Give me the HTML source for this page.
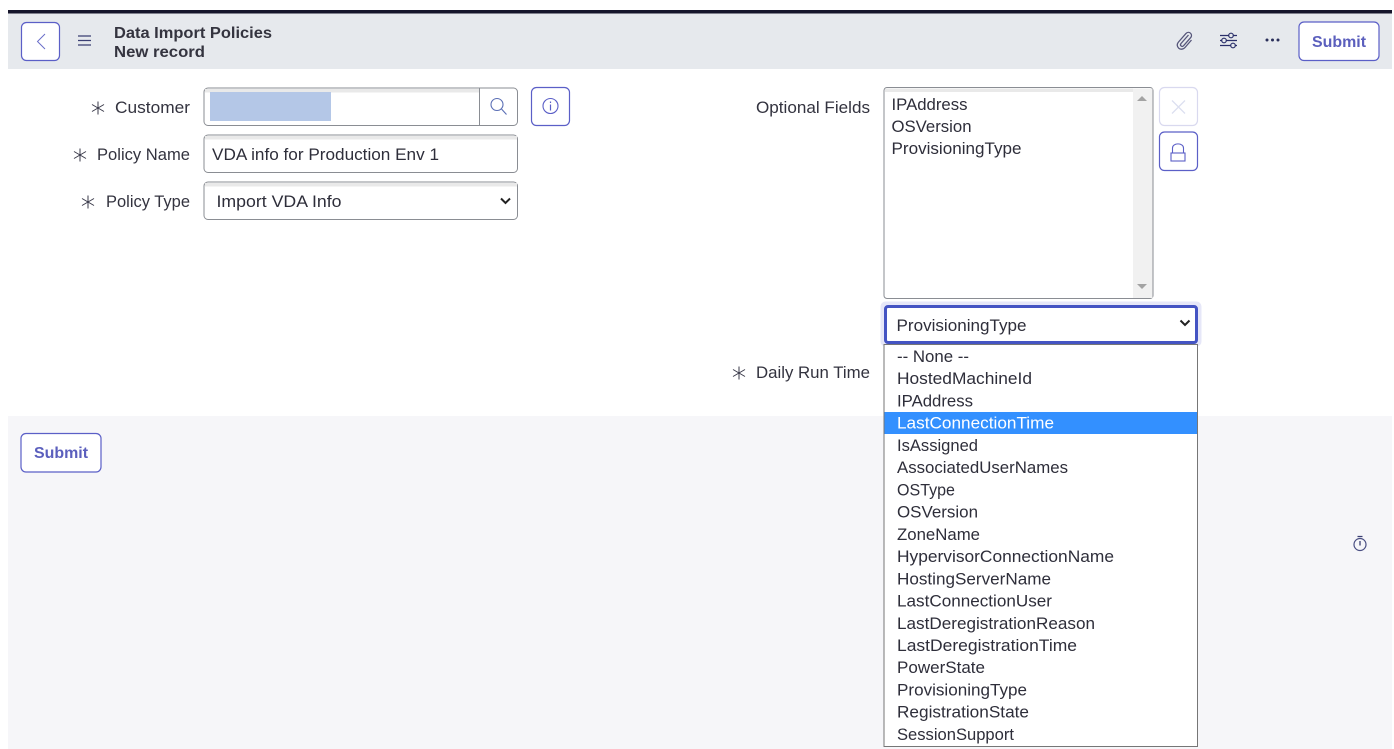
<!DOCTYPE html>
<html lang="en">
<head>
<meta charset="utf-8">
<title>Data Import Policies</title>
<style>
html,body{margin:0;padding:0;background:#fff;width:1394px;height:749px;overflow:hidden}
svg{display:block}
text{font-family:"Liberation Sans",sans-serif;font-size:16.5px;fill:#2e2e3a}
.b{font-weight:bold;font-size:16px}
.s{font-weight:bold;font-size:16px;fill:#5b5fbd}
.l{fill:#33333f}
</style>
</head>
<body>
<svg width="1394" height="749" viewBox="0 0 1394 749" xmlns="http://www.w3.org/2000/svg">
<rect x="8" y="10" width="1384" height="3.500" fill="#15152b"/>
<rect x="8" y="13.500" width="1384" height="55.500" fill="#e6e9ed"/>
<rect x="8" y="416" width="1384" height="333" fill="#f6f6f9"/>

<!-- header left -->
<rect x="21.500" y="22.500" width="38" height="38" rx="5" fill="#fff" stroke="#5b5fc7" stroke-width="1.200"/>
<path d="M45 34l-7.500 7.500 7.500 7.500" fill="none" stroke="#6a6ec9" stroke-width="1"/>
<path d="M78 36h13M78 40.500h13M78 45h13" stroke="#3a3f73" stroke-width="1.200" fill="none"/>
<text x="114" y="38" textLength="158" lengthAdjust="spacingAndGlyphs" class="b" style="fill:#34343f">Data Import Policies</text>
<text x="114" y="57" textLength="91" lengthAdjust="spacingAndGlyphs" class="b" style="fill:#34343f">New record</text>

<!-- header right icons -->
<path d="M1188.500 35l-7.500 8.500c-1.500 1.800 .8 4 2.500 2.300l7-8c3-3.400-1.600-7.500-4.600-4.200l-7.400 8.400c-4 4.700 2.500 10 6.500 5.500l6.500-7.500" fill="none" stroke="#56567a" stroke-width="1.300"/>
<path d="M1220 35.500h17M1220 40.500h17M1220 45.500h17" stroke="#2a2f6a" stroke-width="1.200" fill="none"/>
<circle cx="1231" cy="35.500" r="2.300" fill="#e6e9ed" stroke="#2a2f6a" stroke-width="1.200"/>
<circle cx="1224" cy="40.500" r="2.300" fill="#e6e9ed" stroke="#2a2f6a" stroke-width="1.200"/>
<circle cx="1233" cy="45.500" r="2.300" fill="#e6e9ed" stroke="#2a2f6a" stroke-width="1.200"/>
<circle cx="1267" cy="40" r="1.500" fill="#2a2f5a"/><circle cx="1272.500" cy="40" r="1.500" fill="#2a2f5a"/><circle cx="1278" cy="40" r="1.500" fill="#2a2f5a"/>
<rect x="1299" y="22" width="80" height="38.500" rx="5" fill="#fff" stroke="#5b5fc7" stroke-width="1.200"/>
<text x="1312" y="47" textLength="54" lengthAdjust="spacingAndGlyphs" class="s">Submit</text>

<!-- left form -->
<g stroke="#3a3a4a" stroke-width="1" fill="none">
<path d="M98 101.500v13M92 104.500l12 7M104 104.500l-12 7"/>
<path d="M80 148.500v13M74 151.500l12 7M86 151.500l-12 7"/>
<path d="M88 195.500v13M82 198.500l12 7M94 198.500l-12 7"/>
<path d="M739 366.500v13M733 369.500l12 7M745 369.500l-12 7"/>
</g>
<text x="115" y="113" textLength="75" lengthAdjust="spacingAndGlyphs" class="l">Customer</text>
<text x="97" y="160" textLength="93" lengthAdjust="spacingAndGlyphs" class="l">Policy Name</text>
<text x="106" y="207" textLength="84" lengthAdjust="spacingAndGlyphs" class="l">Policy Type</text>

<rect x="204" y="88" width="313.500" height="37.500" rx="4" fill="#fff" stroke="#8a8d93" stroke-width="1"/>
<rect x="205" y="89" width="274" height="3.500" fill="#e9e9e9"/>
<path d="M479.500 88v37.500" stroke="#8a8d93" stroke-width="1"/>
<rect x="210" y="92" width="121" height="29" fill="#b4c7e7"/>
<circle cx="497" cy="104.500" r="6" fill="none" stroke="#5b6fb5" stroke-width="1.100"/>
<path d="M501.500 109l5 5.500" stroke="#5b6fb5" stroke-width="1.100"/>

<rect x="531.500" y="87.500" width="38" height="38" rx="5" fill="#fff" stroke="#5b5fc7" stroke-width="1.200"/>
<circle cx="550.500" cy="106" r="7.500" fill="none" stroke="#5b5fc7" stroke-width="1.100"/>
<path d="M550.500 104.500v6M550.500 101.500v1.500" stroke="#5b5fc7" stroke-width="1.200"/>

<rect x="204" y="135" width="313.500" height="37.500" rx="4" fill="#fff" stroke="#8a8d93" stroke-width="1"/>
<rect x="205" y="136" width="312" height="3.500" fill="#e9e9e9"/>
<text x="212" y="160" textLength="227" lengthAdjust="spacingAndGlyphs">VDA info for Production Env 1</text>

<rect x="204" y="182" width="313.500" height="37.500" rx="4" fill="#fff" stroke="#8a8d93" stroke-width="1"/>
<rect x="205" y="183" width="312" height="3.500" fill="#e9e9e9"/>
<text x="216.500" y="207" textLength="125" lengthAdjust="spacingAndGlyphs">Import VDA Info</text>
<path d="M501 198.500l4.500 4.500 4.500-4.500" fill="none" stroke="#222" stroke-width="2"/>

<!-- right form -->
<text x="756" y="113" textLength="114" lengthAdjust="spacingAndGlyphs" class="l">Optional Fields</text>
<rect x="884" y="87.500" width="269" height="211" rx="3" fill="#fff" stroke="#8a8d93" stroke-width="1"/>
<rect x="885" y="88.500" width="248" height="3.500" fill="#e9e9e9"/>
<rect x="1133" y="88.500" width="19.500" height="209.500" fill="#f1f1f1"/>
<path d="M1137 101l5-5 5 5z" fill="#a3a3a3"/>
<path d="M1137 284l5 5 5-5z" fill="#a3a3a3"/>
<text x="891.500" y="110" textLength="76" lengthAdjust="spacingAndGlyphs">IPAddress</text>
<text x="891.500" y="132" textLength="80" lengthAdjust="spacingAndGlyphs">OSVersion</text>
<text x="891.500" y="154" textLength="130" lengthAdjust="spacingAndGlyphs">ProvisioningType</text>

<rect x="1159.500" y="87.500" width="38" height="38" rx="5" fill="#fff" stroke="#d9d9ef" stroke-width="1.200"/>
<path d="M1172 100.500l13 13M1185 100.500l-13 13" stroke="#dcdff0" stroke-width="1.300"/>
<rect x="1159.500" y="132" width="38" height="38.500" rx="5" fill="#fff" stroke="#5b5fc7" stroke-width="1.200"/>
<rect x="1171" y="153" width="14" height="8" fill="none" stroke="#5b5fc7" stroke-width="1.100"/>
<path d="M1172.500 153v-5c0-5.500 11-5.500 11 0v5" fill="none" stroke="#5b5fc7" stroke-width="1.100"/>

<rect x="880.500" y="301.500" width="321" height="45" rx="5" fill="#e6e7f8"/>
<rect x="885.500" y="306.500" width="311" height="36" rx="2.500" fill="#fff" stroke="#4454c3" stroke-width="3"/>
<text x="896.500" y="331" textLength="130" lengthAdjust="spacingAndGlyphs">ProvisioningType</text>
<path d="M1180.500 320.500l4.500 4.500 4.500-4.500" fill="none" stroke="#222" stroke-width="2"/>

<text x="756" y="378" textLength="114" lengthAdjust="spacingAndGlyphs" class="l">Daily Run Time</text>

<!-- dropdown -->
<rect x="884" y="344.500" width="313.500" height="402" fill="#fff" stroke="#767676" stroke-width="1"/>
<rect x="884.500" y="412" width="312.500" height="22" fill="#3390ff"/>
<text x="897" y="362" textLength="72" lengthAdjust="spacingAndGlyphs">-- None --</text>
<text x="897" y="384.200" textLength="135" lengthAdjust="spacingAndGlyphs">HostedMachineId</text>
<text x="897" y="406.400" textLength="76" lengthAdjust="spacingAndGlyphs">IPAddress</text>
<text x="897" y="428.700" textLength="157" lengthAdjust="spacingAndGlyphs" style="fill:#fff">LastConnectionTime</text>
<text x="897" y="450.900" textLength="81" lengthAdjust="spacingAndGlyphs">IsAssigned</text>
<text x="897" y="473.100" textLength="171" lengthAdjust="spacingAndGlyphs">AssociatedUserNames</text>
<text x="897" y="495.400" textLength="58" lengthAdjust="spacingAndGlyphs">OSType</text>
<text x="897" y="517.600" textLength="81" lengthAdjust="spacingAndGlyphs">OSVersion</text>
<text x="897" y="539.800" textLength="83" lengthAdjust="spacingAndGlyphs">ZoneName</text>
<text x="897" y="562.100" textLength="217" lengthAdjust="spacingAndGlyphs">HypervisorConnectionName</text>
<text x="897" y="584.300" textLength="154" lengthAdjust="spacingAndGlyphs">HostingServerName</text>
<text x="897" y="606.500" textLength="155" lengthAdjust="spacingAndGlyphs">LastConnectionUser</text>
<text x="897" y="628.800" textLength="198" lengthAdjust="spacingAndGlyphs">LastDeregistrationReason</text>
<text x="897" y="651" textLength="180" lengthAdjust="spacingAndGlyphs">LastDeregistrationTime</text>
<text x="897" y="673.200" textLength="88" lengthAdjust="spacingAndGlyphs">PowerState</text>
<text x="897" y="695.500" textLength="130" lengthAdjust="spacingAndGlyphs">ProvisioningType</text>
<text x="897" y="717.700" textLength="132" lengthAdjust="spacingAndGlyphs">RegistrationState</text>
<text x="897" y="740" textLength="117" lengthAdjust="spacingAndGlyphs">SessionSupport</text>

<!-- footer -->
<rect x="21" y="433.500" width="80" height="38.500" rx="5" fill="#fff" stroke="#5b5fc7" stroke-width="1.200"/>
<text x="34" y="458" textLength="54" lengthAdjust="spacingAndGlyphs" class="s">Submit</text>
<circle cx="1360" cy="544.500" r="6" fill="none" stroke="#4a4f83" stroke-width="1.200"/>
<path d="M1357.500 536.500h5M1360 541v4.500" stroke="#3a3f73" stroke-width="1.300"/>
</svg>
</body>
</html>
